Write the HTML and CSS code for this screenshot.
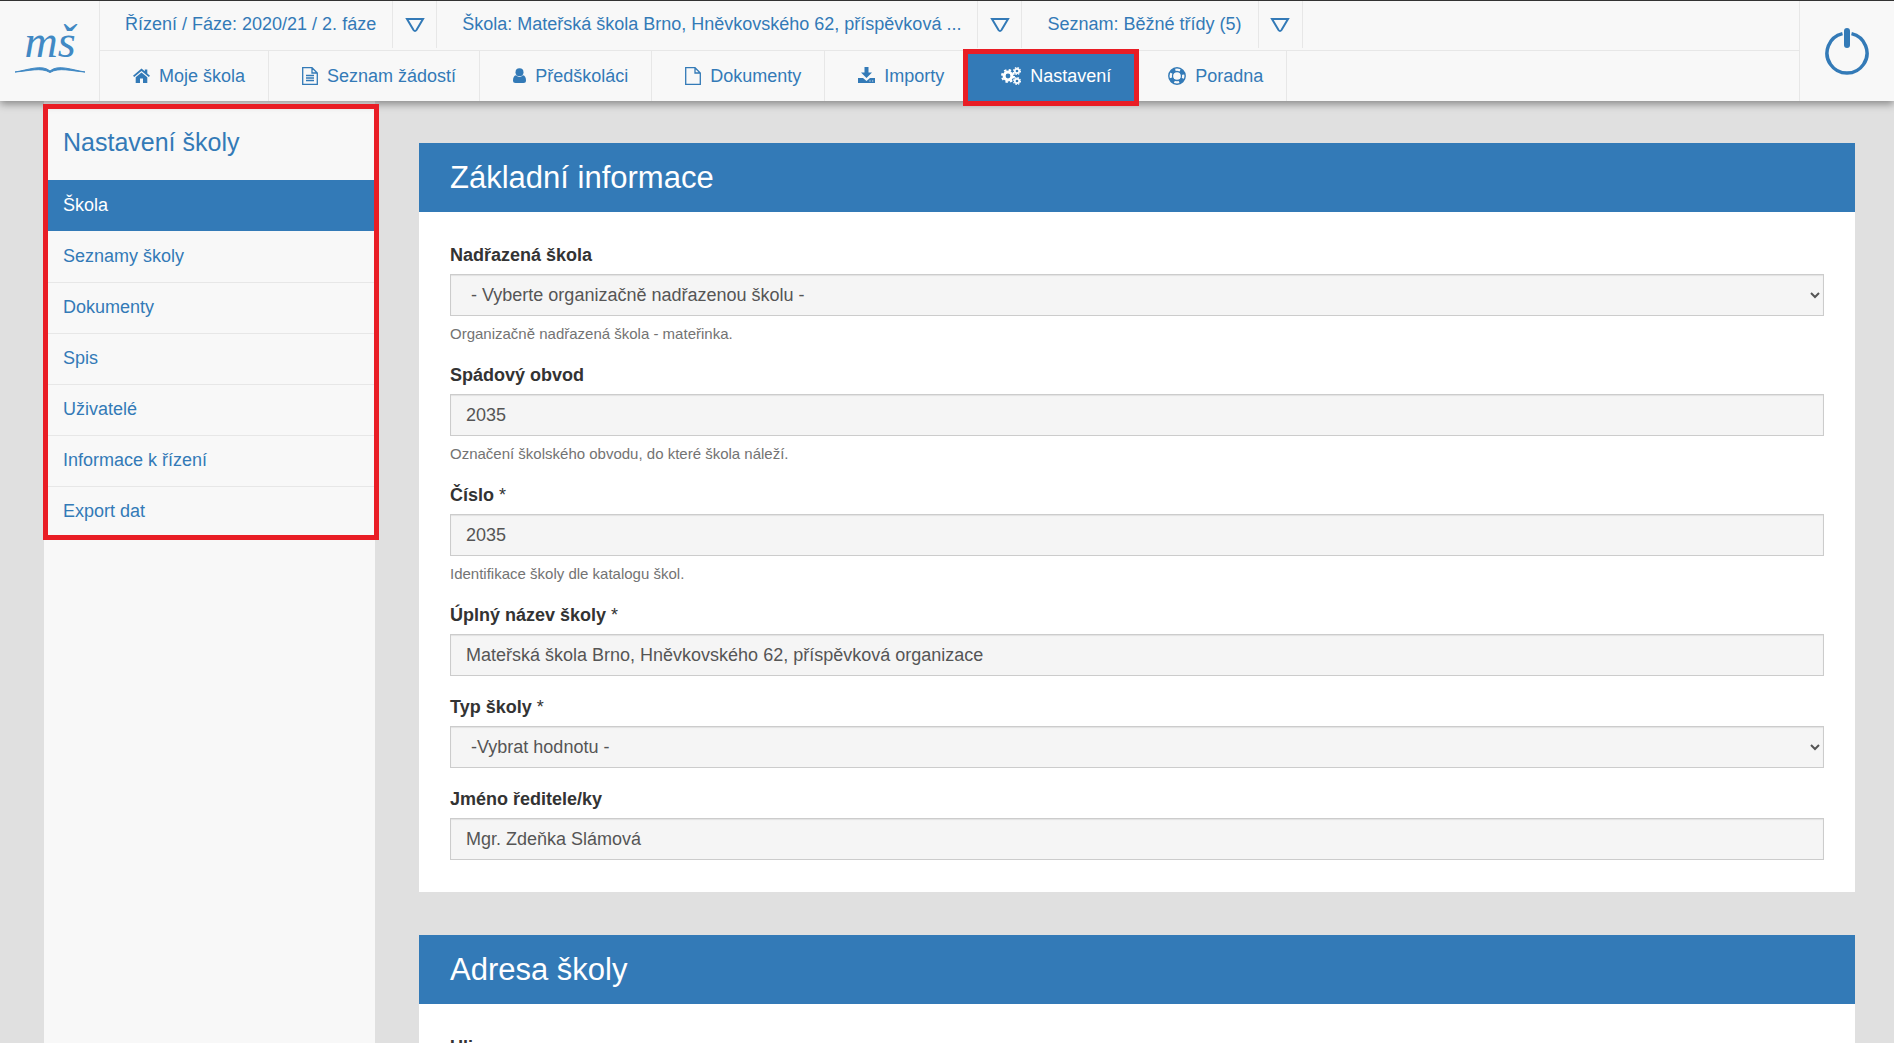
FILE: index.html
```html
<!DOCTYPE html>
<html lang="cs">
<head>
<meta charset="utf-8">
<meta name="viewport" content="width=device-width, initial-scale=1">
<title>Nastavení školy</title>
<link rel="stylesheet" href="styles.css">
</head>
<body>
<header class="topbar">
  <a class="logo" href="#" aria-label="mš">
    <svg width="72" height="80" viewBox="0 0 72 80" aria-hidden="true">
      <text class="logo-text" x="36" y="46" text-anchor="middle">mš</text>
      <path d="M1 61C14 59 28 53 36 60C44 53 58 59 71 61C57 60 45 56 36 61.500C27 56 15 60 1 61Z" fill="currentColor" stroke="currentColor" stroke-width="1"/>
    </svg>
  </a>
  <div class="bars">
    <div class="context">
      <a class="context-link" href="#">Řízení / Fáze: 2020/21 / 2. fáze</a>
      <button class="context-toggle" type="button" aria-label="Vybrat řízení"><svg width="20" height="16" viewBox="0 0 20 16"><path d="M2 2H18L11.500 13Q10 15 8.500 13Z"/></svg></button>
      <a class="context-link" href="#">Škola: Mateřská škola Brno, Hněvkovského 62, příspěvková ...</a>
      <button class="context-toggle" type="button" aria-label="Vybrat školu"><svg width="20" height="16" viewBox="0 0 20 16"><path d="M2 2H18L11.500 13Q10 15 8.500 13Z"/></svg></button>
      <a class="context-link" href="#">Seznam: Běžné třídy (5)</a>
      <button class="context-toggle" type="button" aria-label="Vybrat seznam"><svg width="20" height="16" viewBox="0 0 20 16"><path d="M2 2H18L11.500 13Q10 15 8.500 13Z"/></svg></button>
    </div>
    <nav class="menu">
      <a class="menu-link" href="#"><svg width="17" height="18" viewBox="0 0 17 18"><path fill="currentColor" d="M8.500 5.500L14.300 10.300V16H10V11.500H7V16H2.700V10.300ZM8.500 1.500L11.800 4.300V2.500H14.300V6.400L17 8.700L15.800 10.100L8.500 4L1.200 10.100L0 8.700Z"/></svg>Moje škola</a>
      <a class="menu-link" href="#"><svg width="16" height="18" viewBox="0 0 16 18"><path fill="none" stroke="currentColor" stroke-width="1.300" d="M.7.7H10L15.300 6V17.300H.7ZM10 .7V6H15.300M4 8.500H12M4 11H12M4 13.500H12"/></svg>Seznam žádostí</a>
      <a class="menu-link" href="#"><svg width="13" height="18" viewBox="0 0 13 18"><circle cx="6.500" cy="5.200" r="4" fill="currentColor"/><path fill="currentColor" d="M3 8.300Q6.500 11.500 10 8.300Q13 9 13 13.500Q13 16 10.500 16H2.500Q0 16 0 13.500Q0 9 3 8.300Z"/></svg>Předškoláci</a>
      <a class="menu-link" href="#"><svg width="16" height="18" viewBox="0 0 16 18"><path fill="none" stroke="currentColor" stroke-width="1.300" d="M.7.7H10L15.300 6V17.300H.7ZM10 .7V6H15.300"/></svg>Dokumenty</a>
      <a class="menu-link" href="#"><svg width="17" height="18" viewBox="0 0 17 18"><path fill="currentColor" d="M6.500 0H10.500V5.500H14L8.500 11L3 5.500H6.500ZM0 11H5L8.500 14L12 11H17V16H0Z"/><path d="M11.500 14H12.500M14.200 14H15.200" stroke="#f8f8f8"/></svg>Importy</a>
      <a class="menu-link is-active" href="#"><svg width="20" height="18" viewBox="0 0 20 18" fill="none" stroke="currentColor"><circle cx="7" cy="9" r="3.900" stroke-width="3"/><circle cx="7" cy="9" r="6" stroke-width="2" stroke-dasharray="2.400 2.312"/><circle cx="16" cy="4" r="2.200" stroke-width="1.700"/><circle cx="16" cy="4" r="3.400" stroke-width="1.200" stroke-dasharray="1.600 1.070"/><circle cx="16" cy="14" r="2.200" stroke-width="1.700"/><circle cx="16" cy="14" r="3.400" stroke-width="1.200" stroke-dasharray="1.600 1.070"/></svg>Nastavení<span class="callout callout-menu"></span></a>
      <a class="menu-link" href="#"><svg width="18" height="18" viewBox="0 0 18 18" fill="none" stroke="currentColor"><circle cx="9" cy="9" r="8.200" stroke-width="1.400"/><circle cx="9" cy="9" r="4.500" stroke-width="1.300"/><circle cx="9" cy="9" r="6.300" stroke-width="3.800" stroke-dasharray="5 4.896" stroke-dashoffset="-2.450"/></svg>Poradna</a>
    </nav>
  </div>
  <button class="logout" type="button" aria-label="Odhlásit">
    <svg width="44" height="48" viewBox="0 0 44 48" fill="none" stroke="currentColor"><path d="M17.500 6.600A20 20 0 1 0 26.500 6.600" stroke-width="3.500"/><path d="M22 4V18" stroke-width="6" stroke-linecap="round"/></svg>
  </button>
</header>

<div class="page">
  <aside class="sidebar">
    <div class="sidebar-menu">
      <h2 class="sidebar-title">Nastavení školy</h2>
      <nav>
        <a class="side-link is-active" href="#">Škola</a>
        <a class="side-link" href="#">Seznamy školy</a>
        <a class="side-link" href="#">Dokumenty</a>
        <a class="side-link" href="#">Spis</a>
        <a class="side-link" href="#">Uživatelé</a>
        <a class="side-link" href="#">Informace k řízení</a>
        <a class="side-link" href="#">Export dat</a>
      </nav>
      <span class="callout callout-side"></span>
    </div>
  </aside>

  <main class="content">
    <section class="card">
      <h1 class="card-title">Základní informace</h1>
      <form class="card-body">
        <div class="field">
          <label for="parent">Nadřazená škola</label>
          <select id="parent"><option>- Vyberte organizačně nadřazenou školu -</option></select>
          <p class="hint">Organizačně nadřazená škola - mateřinka.</p>
        </div>
        <div class="field">
          <label for="district">Spádový obvod</label>
          <input id="district" type="text" value="2035">
          <p class="hint">Označení školského obvodu, do které škola náleží.</p>
        </div>
        <div class="field">
          <label for="number">Číslo <span class="required">*</span></label>
          <input id="number" type="text" value="2035">
          <p class="hint">Identifikace školy dle katalogu škol.</p>
        </div>
        <div class="field">
          <label for="name">Úplný název školy <span class="required">*</span></label>
          <input id="name" type="text" value="Mateřská škola Brno, Hněvkovského 62, příspěvková organizace">
        </div>
        <div class="field">
          <label for="type">Typ školy <span class="required">*</span></label>
          <select id="type"><option>-Vybrat hodnotu -</option></select>
        </div>
        <div class="field">
          <label for="head">Jméno ředitele/ky</label>
          <input id="head" type="text" value="Mgr. Zdeňka Slámová">
        </div>
      </form>
    </section>

    <section class="card">
      <h1 class="card-title">Adresa školy</h1>
      <form class="card-body">
        <div class="field">
          <label for="street">Ulice</label>
          <input id="street" type="text">
        </div>
      </form>
    </section>
  </main>
</div>
</body>
</html>
```
FILE: styles.css
```css
:root {
  --blue: #337ab7;
  --bar: #f8f8f8;
  --line: #e7e7e7;
  --red: #e91d25;
}

* {
  box-sizing: border-box;
}

body {
  margin: 0;
  background: #e0e0e0;
  color: #333;
  font: 18px/25px "Liberation Sans", Arial, sans-serif;
}

a {
  color: var(--blue);
  text-decoration: none;
}

button {
  padding: 0;
  border: 0;
  background: none;
  color: var(--blue);
  cursor: pointer;
}

/* Top bar */
.topbar {
  position: sticky;
  top: 0;
  z-index: 1;
  display: flex;
  border-top: 1px solid #333;
  background: var(--bar);
  box-shadow: 0 3px 8px rgba(0, 0, 0, .4);
}

.logo,
.logout {
  display: flex;
  flex: none;
  align-items: center;
  justify-content: center;
}

.logo {
  width: 100px;
  border-right: 1px solid var(--line);
  color: #4189c4;
}

.logo-text {
  fill: currentColor;
  font: italic 46px "Liberation Serif", serif;
}

.logout {
  width: 95px;
  border-left: 1px solid var(--line);
}

.bars {
  flex: 1;
  min-width: 0;
}

.context,
.menu {
  display: flex;
  height: 50px;
}

.context {
  padding-bottom: 2px;
  border-bottom: 1px solid var(--line);
}

.context-link,
.menu-link {
  display: flex;
  align-items: center;
  border-right: 1px solid var(--line);
  white-space: nowrap;
}

.context-link {
  padding: 0 16px 0 25px;
}

.context-toggle {
  display: flex;
  align-items: center;
  justify-content: center;
  width: 44px;
  border-right: 1px solid var(--line);
}

.context-toggle path {
  fill: none;
  stroke: currentColor;
  stroke-width: 2;
}

.menu-link {
  position: relative;
  gap: 9px;
  padding: 0 23px 0 33px;
}

.menu-link.is-active,
.side-link.is-active {
  border-color: var(--blue);
  background: var(--blue);
  color: #fff;
}

/* Red highlight frames */
.callout {
  position: absolute;
  border: 5px solid var(--red);
  pointer-events: none;
}

.callout-menu {
  inset: -2px -5px -5px;
}

.callout-side {
  z-index: 2;
  inset: 3px -4px -3px -1px;
}

/* Page */
.page {
  display: grid;
  grid-template-columns: 331px minmax(0, 1fr);
  gap: 44px;
  padding: 0 39px 0 44px;
}

.sidebar {
  background: var(--bar);
}

.sidebar-menu {
  position: relative;
}

.sidebar-title {
  margin: 0;
  padding: 24px 19px 20px;
  color: var(--blue);
  font-size: 25px;
  font-weight: 400;
  line-height: 35px;
}

.side-link {
  display: block;
  padding: 12px 19px 13px;
  border-top: 1px solid var(--line);
}

.side-link.is-active + .side-link {
  border-color: transparent;
}

.content {
  display: flex;
  flex-direction: column;
  gap: 43px;
  padding: 42px 0;
}

.card {
  background: #fff;
}

.card-title {
  margin: 0;
  padding: 17px 31px;
  background: var(--blue);
  color: #fff;
  font-size: 31px;
  font-weight: 400;
  line-height: 35px;
}

.card-body {
  display: flex;
  flex-direction: column;
  gap: 19px;
  padding: 31px 31px 32px;
}

.field label {
  display: block;
  margin-bottom: 6px;
  font-weight: 700;
}

.required {
  font-weight: 400;
}

.field input,
.field select {
  display: block;
  width: 100%;
  height: 42px;
  padding: 0 15px;
  border: 1px solid #ccc;
  border-radius: 0;
  background-color: #f5f5f5;
  box-shadow: inset 0 1px 1px rgba(0, 0, 0, .08);
  color: #555;
  font: inherit;
}

.field select {
  padding: 0 3px 0 16px;
}

.hint {
  margin: 8px 0 0;
  color: #737373;
  font-size: 15px;
  line-height: 20px;
}
```
